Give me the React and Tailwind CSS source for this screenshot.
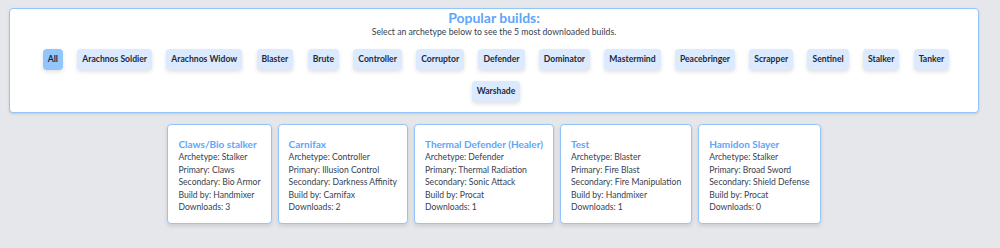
import React from "react";

const archetypes = [
  "All",
  "Arachnos Soldier",
  "Arachnos Widow",
  "Blaster",
  "Brute",
  "Controller",
  "Corruptor",
  "Defender",
  "Dominator",
  "Mastermind",
  "Peacebringer",
  "Scrapper",
  "Sentinel",
  "Stalker",
  "Tanker",
  "Warshade",
];

const builds = [
  { name: "Claws/Bio stalker", at: "Stalker", primary: "Claws", secondary: "Bio Armor", by: "Handmixer", downloads: 3 },
  { name: "Carnifax", at: "Controller", primary: "Illusion Control", secondary: "Darkness Affinity", by: "Carnifax", downloads: 2 },
  { name: "Thermal Defender (Healer)", at: "Defender", primary: "Thermal Radiation", secondary: "Sonic Attack", by: "Procat", downloads: 1 },
  { name: "Test", at: "Blaster", primary: "Fire Blast", secondary: "Fire Manipulation", by: "Handmixer", downloads: 1 },
  { name: "Hamidon Slayer", at: "Stalker", primary: "Broad Sword", secondary: "Shield Defense", by: "Procat", downloads: 0 },
];

export default function App() {
  const selected = "All";

  return (
    <div className="min-h-[248px] bg-[#e5e7eb] pt-[8px] font-['Lato','Noto_Sans',sans-serif]">
      <div className="ml-[9px] w-[970px]">
        {/* Archetype picker */}
        <div className="rounded-[4px] border border-[#93c5fd] bg-white pb-[10px] text-center shadow-sm">
          <h2 className="text-[14px] font-bold leading-[18px] text-[#60a5fa]">Popular builds:</h2>
          <p className="text-[8.7px] leading-[10px] text-[#374151]">
            Select an archetype below to see the 5 most downloaded builds.
          </p>
          <div className="mt-[12px] flex flex-wrap justify-center gap-x-[14.3px] gap-y-[11px] pl-[4px]">
            {archetypes.map((a) => (
              <button
                key={a}
                className={
                  "h-[21px] rounded-[4px] px-[5px] text-[8.6px] font-bold text-[#1f2937] shadow-[0_2px_4px_rgba(0,0,0,0.12)] " +
                  (a === selected ? "bg-[#93c5fd]" : "bg-[#dbeafe]")
                }
              >
                {a}
              </button>
            ))}
          </div>
        </div>

        {/* Build cards */}
        <div className="mt-[11px] flex justify-center gap-[6px]">
          {builds.map((b) => (
            <div
              key={b.name}
              className="rounded-[4px] border border-[#93c5fd] bg-white px-[10px] pt-[12px] pb-[9px] shadow-[0_2px_4px_rgba(0,0,0,0.12)]"
            >
              <div className="text-[10px] font-bold leading-[14px] text-[#60a5fa]">{b.name}</div>
              <div className="text-[8.6px] leading-[12.6px] text-[#374151]">
                <div>Archetype: {b.at}</div>
                <div>Primary: {b.primary}</div>
                <div>Secondary: {b.secondary}</div>
                <div>Build by: {b.by}</div>
                <div>Downloads: {b.downloads}</div>
              </div>
            </div>
          ))}
        </div>
      </div>
    </div>
  );
}
